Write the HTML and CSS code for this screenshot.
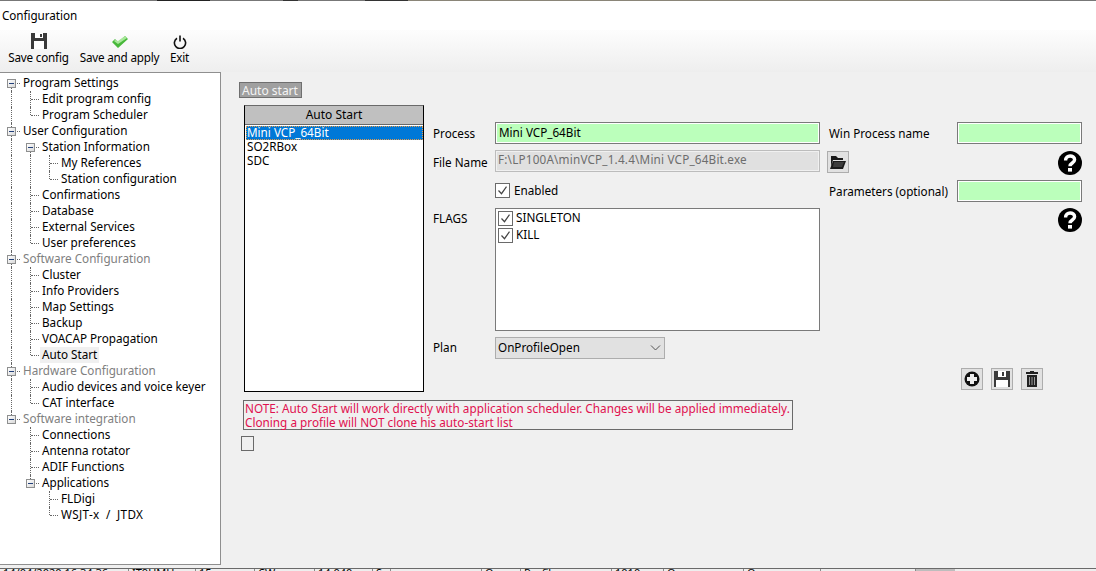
FILE: index.html
```html
<!DOCTYPE html>
<html lang="en">
<head>
<meta charset="utf-8">
<title>Configuration</title>
<link rel="stylesheet" href="styles.css">
</head>
<body>
<div class="topline"></div>
<div class="titlebar">Configuration</div>
<div class="toolbar">
  <div class="tool tool-save">
    <svg width="16" height="16" viewBox="0 0 16 16"><path fill="#3a3a3a" d="M0 0h16v16H0z"/><path fill="#fff" d="M4 0h8v5H4zM3 8h10v8H3z"/><path fill="#3a3a3a" d="M9 1h2v3H9z"/></svg>
    <span>Save config</span>
  </div>
  <div class="tool tool-apply">
    <svg width="16" height="14" viewBox="0 0 16 14"><path fill="#47b83a" d="M0 7l3-3 3 3 7-6 3 3-10 9z"/><path fill="#a8e89a" d="M6 6l7-5 2 2-9 6-4-3 1-1z"/></svg>
    <span>Save and apply</span>
  </div>
  <div class="tool tool-exit">
    <svg width="14" height="14" viewBox="0 0 14 14"><path fill="none" stroke="#111" stroke-width="1.6" d="M4 3.2a5.6 5.6 0 1 0 6 0M7 0.5v6"/></svg>
    <span>Exit</span>
  </div>
</div>
<div class="content">
  <nav class="tree">
    <div class="row"><span class="g first"><i class="exp"></i></span><span class="t">Program Settings</span></div>
    <div class="row"><span class="g v"></span><span class="g tee"></span><span class="t">Edit program config</span></div>
    <div class="row"><span class="g v"></span><span class="g elbow"></span><span class="t">Program Scheduler</span></div>
    <div class="row"><span class="g tee"><i class="exp"></i></span><span class="t">User Configuration</span></div>
    <div class="row"><span class="g v"></span><span class="g first"><i class="exp"></i></span><span class="t">Station Information</span></div>
    <div class="row"><span class="g v"></span><span class="g v"></span><span class="g tee"></span><span class="t">My References</span></div>
    <div class="row"><span class="g v"></span><span class="g v"></span><span class="g elbow"></span><span class="t">Station configuration</span></div>
    <div class="row"><span class="g v"></span><span class="g tee"></span><span class="t">Confirmations</span></div>
    <div class="row"><span class="g v"></span><span class="g tee"></span><span class="t">Database</span></div>
    <div class="row"><span class="g v"></span><span class="g tee"></span><span class="t">External Services</span></div>
    <div class="row"><span class="g v"></span><span class="g elbow"></span><span class="t">User preferences</span></div>
    <div class="row"><span class="g tee"><i class="exp"></i></span><span class="t muted">Software Configuration</span></div>
    <div class="row"><span class="g v"></span><span class="g tee"></span><span class="t">Cluster</span></div>
    <div class="row"><span class="g v"></span><span class="g tee"></span><span class="t">Info Providers</span></div>
    <div class="row"><span class="g v"></span><span class="g tee"></span><span class="t">Map Settings</span></div>
    <div class="row"><span class="g v"></span><span class="g tee"></span><span class="t">Backup</span></div>
    <div class="row"><span class="g v"></span><span class="g tee"></span><span class="t">VOACAP Propagation</span></div>
    <div class="row"><span class="g v"></span><span class="g elbow"></span><span class="t current">Auto Start</span></div>
    <div class="row"><span class="g tee"><i class="exp"></i></span><span class="t muted">Hardware Configuration</span></div>
    <div class="row"><span class="g v"></span><span class="g tee"></span><span class="t">Audio devices and voice keyer</span></div>
    <div class="row"><span class="g v"></span><span class="g elbow"></span><span class="t">CAT interface</span></div>
    <div class="row"><span class="g elbow"><i class="exp"></i></span><span class="t muted">Software integration</span></div>
    <div class="row"><span class="g"></span><span class="g tee"></span><span class="t">Connections</span></div>
    <div class="row"><span class="g"></span><span class="g tee"></span><span class="t">Antenna rotator</span></div>
    <div class="row"><span class="g"></span><span class="g tee"></span><span class="t">ADIF Functions</span></div>
    <div class="row"><span class="g"></span><span class="g elbow"><i class="exp"></i></span><span class="t">Applications</span></div>
    <div class="row"><span class="g"></span><span class="g"></span><span class="g tee"></span><span class="t">FLDigi</span></div>
    <div class="row"><span class="g"></span><span class="g"></span><span class="g elbow"></span><span class="t wide">WSJT-x / JTDX</span></div>
  </nav>
  <main class="main">
    <div class="tab-label">Auto start</div>
    <div class="columns">
      <section class="listcol">
        <div class="list-head">Auto Start</div>
        <div class="list-body">
          <div class="item selected">Mini VCP_64Bit</div>
          <div class="item">SO2RBox</div>
          <div class="item">SDC</div>
        </div>
      </section>
      <section class="form">
        <div class="frow r-process"><label>Process</label><div class="input green">Mini VCP_64Bit</div></div>
        <div class="frow r-file"><label>File Name</label><div class="input disabled">F:\LP100A\minVCP_1.4.4\Mini VCP_64Bit.exe</div></div>
        <div class="frow r-enabled"><label></label><div class="check"><span class="box"><svg width="13" height="13" viewBox="0 0 13 13"><path fill="none" stroke="#444" stroke-width="1.2" d="M2.5 6.5l3 3.2 5-7"/></svg></span><span>Enabled</span></div></div>
        <div class="frow r-flags"><label>FLAGS</label>
          <div class="flags">
            <div class="flag"><span class="box"><svg width="13" height="13" viewBox="0 0 13 13"><path fill="none" stroke="#444" stroke-width="1.2" d="M2.5 6.5l3 3.2 5-7"/></svg></span><span>SINGLETON</span></div>
            <div class="flag"><span class="box"><svg width="13" height="13" viewBox="0 0 13 13"><path fill="none" stroke="#444" stroke-width="1.2" d="M2.5 6.5l3 3.2 5-7"/></svg></span><span>KILL</span></div>
          </div>
        </div>
        <div class="frow r-plan"><label>Plan</label>
          <div class="select"><span>OnProfileOpen</span><svg width="11" height="6" viewBox="0 0 11 6"><path fill="none" stroke="#555" stroke-width="1" d="M1 0.5l4.500 4.500 4.500-4.500"/></svg></div>
        </div>
      </section>
      <section class="side">
        <div class="srow"><span class="slabel">Win Process name</span><div class="input green short"></div></div>
        <div class="srow r-folder">
          <button class="iconbtn" type="button" aria-label="Browse"><svg width="16" height="13" viewBox="0 0 16 13"><path fill="#1a1a1a" d="M1 0h5l2 2h5v2H3L1 10V0zM0 13L3 5h13l-3 8z"/><path fill="#fff" d="M4 6h10l-2 5H3z" opacity=".15"/></svg></button>
          <svg class="help" width="24" height="24" viewBox="0 0 24 24"><circle cx="12" cy="12" r="12" fill="#000"/><path fill="none" stroke="#fff" stroke-width="3.4" d="M7.6 9.4c0-6 9-5.6 9-.6 0 3.4-4.6 3-4.6 6.4"/><path fill="#fff" d="M10 17h4v3.6h-4z"/></svg>
        </div>
        <div class="srow r-param"><span class="slabel">Parameters (optional)</span><div class="input green short"></div></div>
        <div class="srow r-help2">
          <svg class="help" width="24" height="24" viewBox="0 0 24 24"><circle cx="12" cy="12" r="12" fill="#000"/><path fill="none" stroke="#fff" stroke-width="3.4" d="M7.6 9.4c0-6 9-5.6 9-.6 0 3.4-4.6 3-4.6 6.4"/><path fill="#fff" d="M10 17h4v3.6h-4z"/></svg>
        </div>
        <div class="actions">
          <button class="iconbtn" type="button" aria-label="Add"><svg width="16" height="16" viewBox="0 0 16 16"><circle cx="8" cy="8" r="7.5" fill="#111"/><path fill="#eee" d="M6 3h4v3h3v4h-3v3H6v-3H3V6h3z"/></svg></button>
          <button class="iconbtn" type="button" aria-label="Save"><svg width="16" height="16" viewBox="0 0 16 16"><path fill="#3a3a3a" d="M0 0h16v16H0z"/><path fill="#fff" d="M4 0h8v6H4zM2 9h12v7H2z"/><path fill="#3a3a3a" d="M8 1h2v4H8z"/></svg></button>
          <button class="iconbtn" type="button" aria-label="Delete"><svg width="12" height="16" viewBox="0 0 12 16"><path fill="#222" d="M4 0h4v1h4v2H0V1h4zM1 4h10v12H1z"/><path fill="#999" d="M3 6h1v8H3zM5.500 6h1v8h-1zM8 6h1v8H8z"/></svg></button>
        </div>
      </section>
    </div>
    <div class="note">NOTE: Auto Start will work directly with application scheduler. Changes will be applied immediately.<br>Cloning a profile will NOT clone his auto-start list</div>
    <div class="tiny"></div>
  </main>
</div>
<footer class="status">
  <span class="cell c1">14/04/2020 16:34:36</span><span class="cell c2">IT9UMH</span><span class="cell c3">15m</span><span class="cell c4">CW</span><span class="cell c5">14.040</span><span class="cell c6">S</span><span class="cell c7"></span><span class="cell c8">Open</span><span class="cell c9">Profile</span><span class="cell c10">1010</span><span class="cell c11">On</span><span class="cell c12">On</span><span class="cell c13"></span><span class="cell c14"></span>
</footer>
</body>
</html>
```
FILE: styles.css
```css
* { box-sizing: border-box; }
html, body { margin: 0; padding: 0; }
body {
  width: 1096px;
  height: 571px;
  overflow: hidden;
  background: #f0f0f0;
  color: #000;
  font: 11.7px/16px "Noto Sans", sans-serif;
  display: flex;
  flex-direction: column;
}
.topline {
  height: 1px;
  flex: none;
  background: linear-gradient(90deg, #777 0 157px, #222 157px 210px, #777 210px 283px, #333 283px 298px, #777 298px 365px, #333 365px 408px, #8a8578 408px 950px, #999 950px 1000px, #777 1000px);
}
.titlebar {
  height: 29px;
  flex: none;
  background: #fff;
  padding: 6px 0 0 2px;
  letter-spacing: -0.05px;
}
.toolbar {
  height: 42px;
  flex: none;
  display: flex;
  padding-left: 8px;
  background: linear-gradient(#fdfdfd, #eeeeee);
}
.tool {
  display: flex;
  flex-direction: column;
  align-items: center;
  justify-content: flex-end;
  height: 35px;
  white-space: nowrap;
  letter-spacing: -0.2px;
}
.tool-save { width: 61px; margin-right: 11px; }
.tool-apply { width: 79px; margin-right: 11px; }
.tool-exit { width: 19px; }
.content { flex: 1; display: flex; min-height: 0; }
.tree {
  width: 221px;
  height: 493px;
  flex: none;
  background: #fff;
  border: 1px solid #8f8f8f;
  border-left: 0;
  padding-top: 2px;
  padding-left: 2px;
}
.row { display: flex; height: 16px; }
.g { position: relative; width: 19px; height: 16px; flex: none; }
.v::before, .tee::before {
  content: "";
  position: absolute;
  left: 9px;
  top: 0;
  bottom: 0;
  border-left: 1px dotted #666;
}
.first::before, .elbow::before {
  content: "";
  position: absolute;
  left: 9px;
  border-left: 1px dotted #666;
}
.first::before { top: 8px; bottom: 0; }
.elbow::before { top: 0; height: 8px; }
.tee::after, .elbow::after, .first::after {
  content: "";
  position: absolute;
  left: 10px;
  width: 8px;
  top: 8px;
  border-top: 1px dotted #666;
}
.exp {
  position: absolute;
  left: 5px;
  top: 4px;
  width: 9px;
  height: 9px;
  z-index: 1;
  border: 1px solid #8e8f8f;
  background: linear-gradient(135deg, #fff, #d8d8d8);
}
.exp::after {
  content: "";
  position: absolute;
  left: 1px;
  top: 3px;
  width: 5px;
  height: 1px;
  background: #22407a;
}
.t { padding: 0 2px; white-space: nowrap; height: 16px; line-height: 14px; }
.wide { word-spacing: 3px; letter-spacing: 0.35px; }
.muted { color: #808080; }
.current { background: #f0f0f0; }
.main { flex: 1; padding: 10px 0 0 18px; min-width: 0; }
.tab-label {
  width: 63px;
  height: 16px;
  line-height: 15px;
  background: #a0a0a0;
  border: 1px solid #6f6f6f;
  color: #f4f4f4;
  padding-left: 2px;
  white-space: nowrap;
  font-size: 12px;
}
.columns { display: flex; margin-top: 7px; margin-left: 5px; height: 287px; }
.listcol {
  width: 180px;
  flex: none;
  display: flex;
  flex-direction: column;
  border: 1px solid #000;
  border-top-color: #6a6a6a;
}
.list-head {
  height: 19px;
  background: #c0c0c0;
  text-align: center;
  line-height: 18px;
  border-bottom: 1px solid #6a6a6a;
  font-size: 12px;
}
.list-body { flex: 1; background: #fff; padding: 0 0 0 1px; }
.item { height: 14px; line-height: 12px; padding-left: 1px; white-space: nowrap; }
.selected { background: #0078d7; color: #fff; outline: 1px dotted #e59a4a; outline-offset: -1px; margin-top: 1px; }
.form { width: 387px; flex: none; margin-left: 9px; padding-top: 17px; }
.frow { display: flex; align-items: center; }
.frow label { width: 62px; flex: none; }
.input {
  height: 22px;
  border: 1px solid #7a7a7a;
  padding-left: 2px;
  white-space: nowrap;
  overflow: hidden;
}
.green { background: #bbffbb; box-shadow: inset 0 0 0 1px #fff; padding-left: 3px; line-height: 18px; }
.disabled { background: #e0e0e0; border-color: #bcbcbc; color: #6d6d6d; box-shadow: inset 0 0 0 1px #f0f0f0; padding-left: 2px; line-height: 17px; letter-spacing: 0.2px; }
.frow .input { width: 325px; }
.r-process { height: 22px; margin-bottom: 6px; }
.r-file { height: 22px; margin-bottom: 11px; }
.r-file label { padding-top: 1px; }
.r-enabled { height: 15px; margin-bottom: 10px; }
.r-flags { align-items: flex-start; height: 123px; margin-bottom: 6px; }
.r-flags label { margin-top: 2px; }
.r-plan { height: 22px; }
.r-plan label { margin-top: -2px; }
.check { display: flex; align-items: center; gap: 4px; }
.check span:last-child { margin-top: -2px; }
.box {
  width: 15px;
  height: 15px;
  flex: none;
  border: 1px solid #6a6a6a;
  background: #fff;
  display: flex;
}
.flags { width: 325px; height: 123px; background: #fff; border: 1px solid #7a7a7a; padding: 1px 0 0 2px; }
.flag { display: flex; align-items: center; gap: 3px; height: 17px; line-height: 15px; }
.flag span:last-child { margin-top: -2px; }
.select {
  width: 170px;
  height: 22px;
  background: #e1e1e1;
  border: 1px solid #adadad;
  display: flex;
  align-items: center;
  justify-content: space-between;
  padding: 0 3px 0 2px;
  white-space: nowrap;
  line-height: 14px;
}
.select span { margin-top: -2px; }
.side { width: 255px; flex: none; margin-left: 7px; padding-top: 17px; }
.srow { display: flex; justify-content: space-between; align-items: center; }
.slabel { padding-left: 2px; white-space: nowrap; }
.short { width: 125px; }
.srow:first-child { height: 22px; margin-bottom: 7px; }
.r-folder { height: 24px; margin-bottom: 5px; align-items: flex-start; }
.r-param { height: 22px; margin-bottom: 6px; }
.r-help2 { height: 24px; justify-content: flex-end; }
.iconbtn {
  width: 22px;
  height: 22px;
  padding: 0;
  background: #e1e1e1;
  border: 1px solid #adadad;
  display: flex;
  align-items: center;
  justify-content: center;
}
.actions { display: flex; gap: 8px; justify-content: flex-end; margin: 136px 39px 0 0; }
.note {
  width: 550px;
  height: 30px;
  margin: 8px 0 0 4px;
  border: 1px solid #6a6a6a;
  color: #e0114f;
  line-height: 14px;
  padding: 0 0 0 1px;
  white-space: nowrap;
  font-size: 11.75px;
}
.tiny { width: 13px; height: 15px; margin: 6px 0 0 2px; border: 1px solid #6a6a6a; }
.status {
  height: 3px;
  flex: none;
  display: flex;
  overflow: hidden;
  border-top: 1px solid #6a6a6a;
  background: #eee;
  font-size: 11px;
  line-height: 8px;
}
.cell { flex: none; height: 2px; border-right: 1px solid #8a8a8a; padding-left: 3px; overflow: hidden; white-space: nowrap; }
.c1 { width: 129px; }
.c2 { width: 67px; }
.c3 { width: 59px; }
.c4 { width: 60px; }
.c5 { width: 58px; }
.c6 { width: 18px; }
.c7 { width: 91px; }
.c8 { width: 39px; }
.c9 { width: 91px; }
.c10 { width: 52px; }
.c11 { width: 80px; }
.c12 { width: 77px; }
.c13 { width: 95px; }
.c14 { width: 39px; background: #bdbdbd; border-right: 0; }
```
